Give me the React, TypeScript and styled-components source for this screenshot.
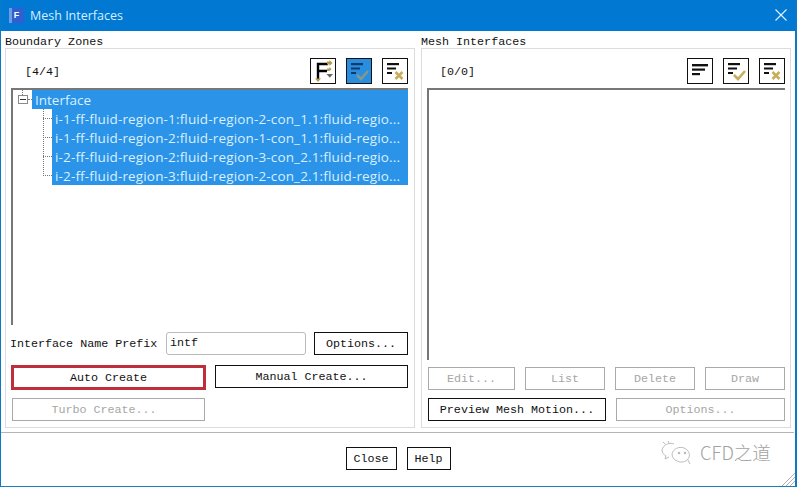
import React from 'react';
import styled, { createGlobalStyle } from 'styled-components';

const GlobalStyle = createGlobalStyle`
  html, body {
    margin: 0;
    padding: 0;
    background: #fff;
  }
`;

const mono = `"Liberation Mono", "DejaVu Sans Mono", monospace`;

const Window = styled.div`
  position: relative;
  box-sizing: border-box;
  width: 797px;
  height: 487px;
  display: flex;
  flex-direction: column;
  background: #fff;
  border-left: 1px solid #0a7ac4;
  border-right: 2px solid #0a7ac4;
  border-bottom: 1px solid #1a7fb8;
  overflow: hidden;
  font-family: ${mono};
  font-size: 11.7px;
  color: #111;
`;

const TitleBar = styled.div`
  box-sizing: border-box;
  flex-shrink: 0;
  height: 31px;
  margin: 0 -2px 0 -1px;
  padding: 0 10px 1px 9px;
  display: flex;
  align-items: center;
  gap: 6px;
  background: #0179d3;
`;

const AppIcon = styled.div`
  width: 15px;
  height: 15px;
  display: flex;
  align-items: center;
  justify-content: center;
  background: linear-gradient(90deg, #6f9be6 0 3px, #2f5fd0 3px);
  color: #fff;
  font: bold 9px "Liberation Sans", sans-serif;
`;

const TitleText = styled.span`
  flex: 1;
  font: 12.5px "Open Sans", sans-serif;
  color: #d4efff;
`;

const CloseGlyph = styled.svg`
  width: 12px;
  height: 12px;
`;

const Panels = styled.div`
  display: grid;
  grid-template-columns: 410px 370px;
  column-gap: 6px;
  padding-left: 4px;
`;

const GroupColumn = styled.div`
  display: flex;
  flex-direction: column;
`;

const Legend = styled.div`
  height: 17px;
  line-height: 23px;
  white-space: pre;
`;

const GroupBox = styled.div<{ $right: number }>`
  box-sizing: border-box;
  height: 380px;
  padding: 9px ${({ $right }) => $right}px 0 5px;
  border: 1px solid #dcdcdc;
`;

const ListHeader = styled.div<{ $indent: number }>`
  display: flex;
  align-items: center;
  gap: 10px;
  height: 26px;
  padding-left: ${({ $indent }) => $indent}px;
`;

const Count = styled.span`
  flex: 1;
  padding-top: 2px;
`;

const IconButton = styled.div<{ $active?: boolean }>`
  box-sizing: border-box;
  width: 26px;
  height: 26px;
  border: 1px solid #111;
  background: ${({ $active }) => ($active ? '#2a8ee0' : '#fff')};
  svg {
    display: block;
  }
`;

const ListFrame = styled.div<{ $height: number }>`
  box-sizing: border-box;
  height: ${({ $height }) => $height}px;
  margin-top: 4px;
  border-top: 2px solid #777;
  border-left: 2px solid #777;
  overflow: hidden;
`;

const RootRow = styled.div`
  position: relative;
  height: 19px;
  margin-left: 19px;
  padding-left: 3px;
  display: flex;
  align-items: center;
  background: #2b93e8;
  font: 13.5px "Open Sans", sans-serif;
  color: #d8f0ff;
`;

const Expander = styled.span`
  position: absolute;
  left: -14px;
  top: 5px;
  box-sizing: border-box;
  width: 10px;
  height: 9px;
  border: 1px solid #8a8a8a;
  background: linear-gradient(#333, #333) center / 6px 1px no-repeat #fff;
  &::before {
    content: '';
    position: absolute;
    left: 3px;
    top: -6px;
    height: 5px;
    border-left: 1px dotted #777;
  }
  &::after {
    content: '';
    position: absolute;
    left: 9px;
    top: 3px;
    width: 4px;
    border-top: 1px dotted #777;
  }
`;

const ChildRows = styled.div`
  position: relative;
  margin-left: 39px;
  background: #2b93e8;
  &::before {
    content: '';
    position: absolute;
    left: -9px;
    top: 0;
    height: 67px;
    border-left: 1px dotted #777;
  }
`;

const ChildRow = styled.div`
  position: relative;
  height: 19px;
  padding-left: 3px;
  display: flex;
  align-items: center;
  white-space: nowrap;
  font: 13.5px "Open Sans", sans-serif;
  letter-spacing: 0.15px;
  color: #d8f0ff;
  &::before {
    content: '';
    position: absolute;
    left: -9px;
    top: 9px;
    width: 9px;
    border-top: 1px dotted #777;
  }
`;

const PrefixRow = styled.div`
  display: flex;
  align-items: center;
  height: 23px;
  margin: 7px 0 10px -1px;
`;

const PrefixLabel = styled.span`
  width: 156px;
  white-space: pre;
`;

const PrefixInput = styled.div`
  box-sizing: border-box;
  width: 140px;
  height: 23px;
  padding-left: 3px;
  margin-right: 8px;
  line-height: 21px;
  border: 1px solid #bbb;
  border-radius: 3px;
`;

const Button = styled.div<{ $disabled?: boolean; $width?: number }>`
  box-sizing: border-box;
  height: 23px;
  ${({ $width }) => ($width ? `width: ${$width}px;` : '')}
  display: flex;
  align-items: center;
  justify-content: center;
  white-space: pre;
  border: 1px solid ${({ $disabled }) => ($disabled ? '#aaa' : '#111')};
  color: ${({ $disabled }) => ($disabled ? '#a6a6a6' : '#111')};
`;

const OutlinedButton = styled(Button)`
  height: 25px;
  border: 3px solid #bd2f3a;
`;

const TurboButton = styled(Button)`
  margin-left: 1px;
  padding-right: 9px;
`;

const CreateGrid = styled.div`
  display: grid;
  grid-template-columns: 195px 193px;
  column-gap: 9px;
  row-gap: 8px;
  align-items: start;
`;

const ActionRow = styled.div<{ $top: number }>`
  display: flex;
  gap: 10px;
  margin: ${({ $top }) => $top}px 0 0 1px;
`;

const Divider = styled.div`
  height: 1px;
  margin: 4px 1px 0 0;
  background: #b4b4b4;
`;

const Footer = styled.div`
  display: flex;
  justify-content: center;
  gap: 10px;
  padding: 14px 0 0 0;
`;

const Watermark = styled.div`
  position: absolute;
  left: 659px;
  top: 439px;
  display: flex;
  align-items: center;
  gap: 6px;
  font: 18.5px "Noto Sans CJK SC", "Noto Sans", sans-serif;
  font-weight: 300;
  color: #a2a2a2;
`;

const Grip = styled.svg`
  position: absolute;
  right: 0;
  bottom: 0;
`;

const lines = (
  <>
    <rect x="4" y="4" width="12" height="2.2" fill="currentColor" />
    <rect x="4" y="8.5" width="9" height="2" fill="currentColor" />
    <rect x="4" y="13" width="5" height="2" fill="currentColor" />
  </>
);

const SortIcon = () => (
  <svg width="24" height="24" viewBox="0 0 24 24">
    <path d="M7 20V5h10M7 12h9" fill="none" stroke="#000" strokeWidth="2.4" />
    <path d="M16 2.5h2.5V1l3 3-3 3V5.5H16z" fill="#b39a4a" />
    <path d="M16 9.5h2.5V8l2 2-2 2h-2.5z" fill="#b39a4a" />
    <path d="M4 19.5h6L7 23z" fill="#b39a4a" />
    <path d="M15.5 15h6.5l-3.2 3.8z" fill="#666" />
  </svg>
);

const CheckIcon = ({ active }: { active?: boolean }) => (
  <svg width="24" height="24" viewBox="0 0 24 24" color={active ? '#123a66' : '#111'}>
    {lines}
    <path
      d="M10 16l4 4 7-8"
      fill="none"
      stroke={active ? '#7f9a8a' : '#c9ad5a'}
      strokeWidth="2.6"
    />
  </svg>
);

const CrossIcon = () => (
  <svg width="24" height="24" viewBox="0 0 24 24" color="#111">
    {lines}
    <path d="M12.5 13l7 7M19.5 13l-7 7" fill="none" stroke="#c9ad5a" strokeWidth="2.6" />
  </svg>
);

const ListIcon = () => (
  <svg width="24" height="24" viewBox="0 0 24 24" color="#111">
    <rect x="4" y="5" width="16" height="2.4" fill="currentColor" />
    <rect x="4" y="9.5" width="13" height="2.2" fill="currentColor" />
    <rect x="4" y="14" width="8" height="2.2" fill="currentColor" />
  </svg>
);

const treeRows = [
  'i-1-ff-fluid-region-1:fluid-region-2-con_1.1:fluid-regio...',
  'i-1-ff-fluid-region-2:fluid-region-1-con_1.1:fluid-regio...',
  'i-2-ff-fluid-region-2:fluid-region-3-con_2.1:fluid-regio...',
  'i-2-ff-fluid-region-3:fluid-region-2-con_2.1:fluid-regio...',
];

export default function App() {
  return (
    <Window>
      <GlobalStyle />
      <TitleBar>
        <AppIcon>F</AppIcon>
        <TitleText>Mesh Interfaces</TitleText>
        <CloseGlyph viewBox="0 0 12 12">
          <path d="M.5.5l11 11M11.5.5l-11 11" stroke="#e4f3ff" strokeWidth="1.1" fill="none" />
        </CloseGlyph>
      </TitleBar>
      <Panels>
        <GroupColumn>
          <Legend>Boundary Zones</Legend>
          <GroupBox $right={6}>
            <ListHeader $indent={14}>
              <Count>[4/4]</Count>
              <IconButton>
                <SortIcon />
              </IconButton>
              <IconButton $active>
                <CheckIcon active />
              </IconButton>
              <IconButton>
                <CrossIcon />
              </IconButton>
            </ListHeader>
            <ListFrame $height={237}>
              <RootRow>
                <Expander />
                Interface
              </RootRow>
              <ChildRows>
                {treeRows.map((row, index) => (
                  <ChildRow key={index}>{row}</ChildRow>
                ))}
              </ChildRows>
            </ListFrame>
            <PrefixRow>
              <PrefixLabel>Interface Name Prefix</PrefixLabel>
              <PrefixInput>intf</PrefixInput>
              <Button $width={94}>Options...</Button>
            </PrefixRow>
            <CreateGrid>
              <OutlinedButton>Auto Create</OutlinedButton>
              <Button>Manual Create...</Button>
              <TurboButton $disabled $width={193}>Turbo Create...</TurboButton>
            </CreateGrid>
          </GroupBox>
        </GroupColumn>
        <GroupColumn>
          <Legend>Mesh Interfaces</Legend>
          <GroupBox $right={5}>
            <ListHeader $indent={13}>
              <Count>[0/0]</Count>
              <IconButton>
                <ListIcon />
              </IconButton>
              <IconButton>
                <CheckIcon />
              </IconButton>
              <IconButton>
                <CrossIcon />
              </IconButton>
            </ListHeader>
            <ListFrame $height={272} />
            <ActionRow $top={7}>
              <Button $disabled $width={87}>Edit...</Button>
              <Button $disabled $width={80}>List</Button>
              <Button $disabled $width={80}>Delete</Button>
              <Button $disabled $width={80}>Draw</Button>
            </ActionRow>
            <ActionRow $top={8}>
              <Button $width={178}>Preview Mesh Motion...</Button>
              <Button $disabled $width={169}>Options...</Button>
            </ActionRow>
          </GroupBox>
        </GroupColumn>
      </Panels>
      <Divider />
      <Footer>
        <Button $width={51}>Close</Button>
        <Button $width={44}>Help</Button>
      </Footer>
      <Watermark>
        <svg width="34" height="26" viewBox="0 0 34 26" fill="none" stroke="#b4b4b4" strokeWidth="0.9">
          <path d="M14 5c-5-2-11 1-12 6 0 3 2 5 4 6l-1 3 4-2" />
          <path d="M12 15c1-5 7-8 12-6 5 2 7 7 4 11-2 3-7 4-11 2-3-1-5-4-5-7z" />
          <path d="M28 21l2 4" />
          <path d="M8 2l1 2M3 3l2 2" />
          <circle cx="19" cy="14" r="0.9" fill="#b4b4b4" />
          <circle cx="25" cy="14" r="0.9" fill="#b4b4b4" />
        </svg>
        <span>CFD之道</span>
      </Watermark>
      <Grip width="14" height="14" viewBox="0 0 14 14" stroke="#9a9a9a" strokeWidth="0.8">
        <path d="M14 1L1 14M14 5L5 14M14 9L9 14" />
      </Grip>
    </Window>
  );
}
